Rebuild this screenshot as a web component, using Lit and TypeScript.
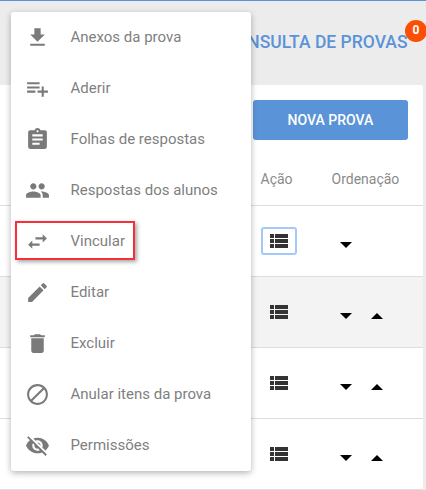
import { LitElement, html, css, svg } from 'lit';
import { customElement } from 'lit/decorators.js';

const icons = {
  download: svg`<path d="M19 9h-4V3H9v6H5l7 7 7-7zM5 18v2h14v-2H5z"/>`,
  playlist: svg`<path d="M14 10H2v2h12v-2zm0-4H2v2h12V6zm4 8v-4h-2v4h-4v2h4v4h2v-4h4v-2h-4zM2 16h8v-2H2v2z"/>`,
  assignment: svg`<path d="M19 3h-4.18C14.4 1.84 13.3 1 12 1c-1.3 0-2.4.84-2.82 2H5c-1.1 0-2 .9-2 2v14c0 1.1.9 2 2 2h14c1.1 0 2-.9 2-2V5c0-1.1-.9-2-2-2zm-7 0c.55 0 1 .45 1 1s-.45 1-1 1-1-.45-1-1 .45-1 1-1zm2 14H7v-2h7v2zm3-4H7v-2h10v2zm0-4H7V7h10v2z"/>`,
  people: svg`<path d="M16 11c1.66 0 2.99-1.34 2.99-3S17.66 5 16 5c-1.66 0-3 1.34-3 3s1.34 3 3 3zm-8 0c1.66 0 2.99-1.34 2.99-3S9.66 5 8 5C6.34 5 5 6.34 5 8s1.34 3 3 3zm0 2c-2.33 0-7 1.17-7 3.5V19h14v-2.5c0-2.33-4.67-3.5-7-3.5zm8 0c-.29 0-.62.02-.97.05 1.16.84 1.97 1.97 1.97 3.45V19h6v-2.5c0-2.33-4.67-3.5-7-3.5z"/>`,
  swap: svg`<path d="M6.99 11L3 15l3.99 4v-3H14v-2H6.99v-3zM21 9l-3.99-4v3H10v2h7.01v3L21 9z"/>`,
  edit: svg`<path d="M3 17.25V21h3.75L17.81 9.94l-3.75-3.75L3 17.25zM20.71 7.04c.39-.39.39-1.02 0-1.41l-2.34-2.34c-.39-.39-1.02-.39-1.41 0l-1.83 1.83 3.75 3.75 1.83-1.83z"/>`,
  trash: svg`<path d="M6 19c0 1.1.9 2 2 2h8c1.1 0 2-.9 2-2V7H6v12zM19 4h-3.5l-1-1h-5l-1 1H5v2h14V4z"/>`,
  block: svg`<path d="M12 2C6.48 2 2 6.48 2 12s4.48 10 10 10 10-4.48 10-10S17.52 2 12 2zM4 12c0-4.42 3.58-8 8-8 1.85 0 3.55.63 4.9 1.69L5.69 16.9C4.63 15.55 4 13.85 4 12zm8 8c-1.85 0-3.55-.63-4.9-1.69L18.31 7.1C19.37 8.45 20 10.15 20 12c0 4.42-3.58 8-8 8z"/>`,
  eyeOff: svg`<path d="M12 7c2.76 0 5 2.24 5 5 0 .65-.13 1.26-.36 1.83l2.92 2.92c1.51-1.26 2.7-2.89 3.43-4.75-1.73-4.39-6-7.5-11-7.5-1.4 0-2.74.25-3.98.7l2.16 2.16C10.74 7.13 11.35 7 12 7zM2 4.27l2.28 2.28.46.46C3.08 8.3 1.78 10.02 1 12c1.73 4.39 6 7.5 11 7.5 1.55 0 3.03-.3 4.38-.84l.42.42L19.73 22 21 20.73 3.27 3 2 4.27zM7.53 9.8l1.55 1.55c-.05.21-.08.43-.08.65 0 1.66 1.34 3 3 3 .22 0 .44-.03.65-.08l1.55 1.55c-.67.33-1.41.53-2.2.53-2.76 0-5-2.24-5-5 0-.79.2-1.53.53-2.2zm4.31-.78l3.15 3.15.02-.16c0-1.66-1.34-3-3-3l-.17.01z"/>`,
};

const menuItems = [
  { icon: icons.download, label: 'Anexos da prova' },
  { icon: icons.playlist, label: 'Aderir' },
  { icon: icons.assignment, label: 'Folhas de respostas' },
  { icon: icons.people, label: 'Respostas dos alunos' },
  { icon: icons.swap, label: 'Vincular', marked: true },
  { icon: icons.edit, label: 'Editar' },
  { icon: icons.trash, label: 'Excluir' },
  { icon: icons.block, label: 'Anular itens da prova' },
  { icon: icons.eyeOff, label: 'Permissões' },
];

const rows = [
  { up: false, focused: true, shaded: false },
  { up: true, focused: false, shaded: true },
  { up: true, focused: false, shaded: false },
  { up: true, focused: false, shaded: false },
];

@customElement('app-root')
export class AppRoot extends LitElement {
  static styles = css`
    :host {
      display: block;
      position: relative;
      width: 426px;
      height: 490px;
      overflow: hidden;
      background: #ececec;
      border-top: 1px solid #5b93d8;
      box-sizing: border-box;
      font-family: Roboto, "Liberation Sans", sans-serif;
    }
    .header {
      height: 84px;
      box-sizing: border-box;
      padding: 30px 18.5px 0 0;
      display: flex;
      justify-content: flex-end;
    }
    .title {
      position: relative;
      font-size: 17.5px;
      line-height: 22px;
      font-weight: 500;
      color: #5b93d8;
      white-space: nowrap;
    }
    .badge {
      position: absolute;
      right: -19.5px;
      top: -11px;
      width: 22px;
      height: 22px;
      border-radius: 50%;
      background: #fa4f04;
      color: #fff;
      font-size: 12px;
      font-weight: 700;
      line-height: 20px;
      text-align: center;
    }
    .card {
      margin-right: 3px;
      background: #fff;
      border-radius: 0 3px 0 0;
    }
    .toolbar {
      display: flex;
      justify-content: flex-end;
      padding: 15px 15px 0 0;
    }
    .new-btn {
      width: 155px;
      height: 40px;
      border: 0;
      border-radius: 3px;
      background: #5b93d8;
      color: #fff;
      font: 500 14px Roboto, "Liberation Sans", sans-serif;
    }
    .row {
      display: grid;
      grid-template-columns: 1fr 71px 91px;
      align-items: center;
      height: 71px;
      box-sizing: border-box;
      border-bottom: 1px solid #dedede;
    }
    .row.head {
      height: 66px;
      padding: 13px 0.5px 0 0;
      font-size: 14px;
      color: #8a8a8a;
    }
    .row.shaded {
      background: #f3f3f3;
    }
    .action {
      display: flex;
      justify-content: center;
      align-items: center;
      width: 36px;
      height: 28px;
      box-sizing: border-box;
    }
    .action.focused {
      border: 2px solid #a5c8fb;
      border-radius: 3px;
    }
    .action svg {
      display: block;
      width: 18px;
      height: 14px;
      fill: #333;
    }
    .sort {
      display: flex;
      gap: 19px;
      padding: 8px 0 0 8px;
    }
    .caret {
      width: 0;
      height: 0;
      border-left: 6px solid transparent;
      border-right: 6px solid transparent;
    }
    .caret.down {
      border-top: 6px solid #000;
    }
    .caret.up {
      border-bottom: 6px solid #000;
    }
    .menu {
      position: absolute;
      left: 11px;
      top: 11px;
      width: 240px;
      background: #fff;
      border-radius: 3px;
      box-shadow: 0 2px 6px rgba(0, 0, 0, 0.3);
    }
    .item {
      position: relative;
      display: flex;
      align-items: center;
      height: 51px;
      padding-left: 14px;
      font-size: 15px;
      color: #7f7f7f;
    }
    .item svg {
      width: 25px;
      height: 25px;
      margin-right: 21px;
      fill: #7a7a7a;
    }
    .label {
      margin: -2px 0 0 -0.5px;
    }
    .mark {
      position: absolute;
      left: 4px;
      top: 5px;
      width: 120px;
      height: 39px;
      box-sizing: border-box;
      border: 2px solid #f5303a;
      box-shadow: 2px 2px 4px rgba(0, 0, 0, 0.35);
    }
  `;

  renderSort(up: boolean) {
    return html`<div class="sort">
      <span class="caret down"></span>
      ${up ? html`<span class="caret up"></span>` : ''}
    </div>`;
  }

  render() {
    return html`
      <div class="header">
        <div class="title">CONSULTA DE PROVAS<span class="badge">0</span></div>
      </div>
      <div class="card">
        <div class="toolbar"><button class="new-btn">NOVA PROVA</button></div>
        <div class="row head"><span></span><span>Ação</span><span>Ordenação</span></div>
        ${rows.map(
          (r) => html`<div class="row ${r.shaded ? 'shaded' : ''}">
            <span></span>
            <div class="action ${r.focused ? 'focused' : ''}">
              <svg viewBox="0 0 18 14">
                <path d="M0 0h4v4H0zM5 0h13v4H5zM0 5h4v4H0zM5 5h13v4H5zM0 10h4v4H0zM5 10h13v4H5z" />
              </svg>
            </div>
            ${this.renderSort(r.up)}
          </div>`
        )}
      </div>
      <div class="menu">
        ${menuItems.map(
          (m) => html`<div class="item">
            <svg viewBox="0 0 24 24">${m.icon}</svg>
            <span class="label">${m.label}</span>
            ${m.marked ? html`<span class="mark"></span>` : ''}
          </div>`
        )}
      </div>
    `;
  }
}
